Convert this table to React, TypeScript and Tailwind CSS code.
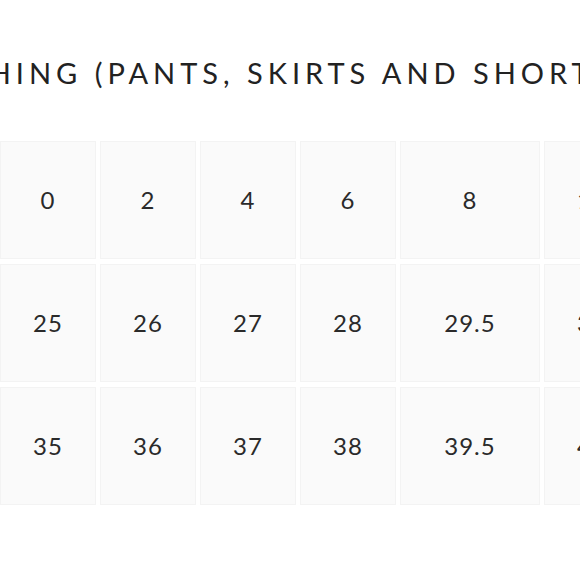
import React from "react";

const widths = [96, 96, 96, 96, 140, 96];
const rows = [
  ["0", "2", "4", "6", "8", "10"],
  ["25", "26", "27", "28", "29.5", "31"],
  ["35", "36", "37", "38", "39.5", "41"],
];

export default function App() {
  return (
    <div
      className="w-[580px] h-[580px] bg-white overflow-hidden"
      style={{ fontFamily: "Lato, 'Noto Sans', sans-serif" }}
    >
      <div className="pt-[56px] h-[141px] overflow-hidden">
        <div className="whitespace-nowrap ml-[-104px] text-[29px] leading-[34px] tracking-[5px] text-[#222]">
          CLOTHING (PANTS, SKIRTS AND SHORTS)
        </div>
      </div>
      <div className="flex flex-col gap-[5px]">
        {rows.map((row, i) => (
          <div key={i} className="flex gap-[4px] h-[118px]">
            {row.map((v, j) => (
              <div
                key={j}
                className="shrink-0 flex items-center justify-center bg-[#fafafa] border border-[#f3f3f3] text-[24px] text-[#2a2a2a] tracking-[1px]"
                style={{ width: widths[j] }}
              >
                {v}
              </div>
            ))}
          </div>
        ))}
      </div>
    </div>
  );
}
